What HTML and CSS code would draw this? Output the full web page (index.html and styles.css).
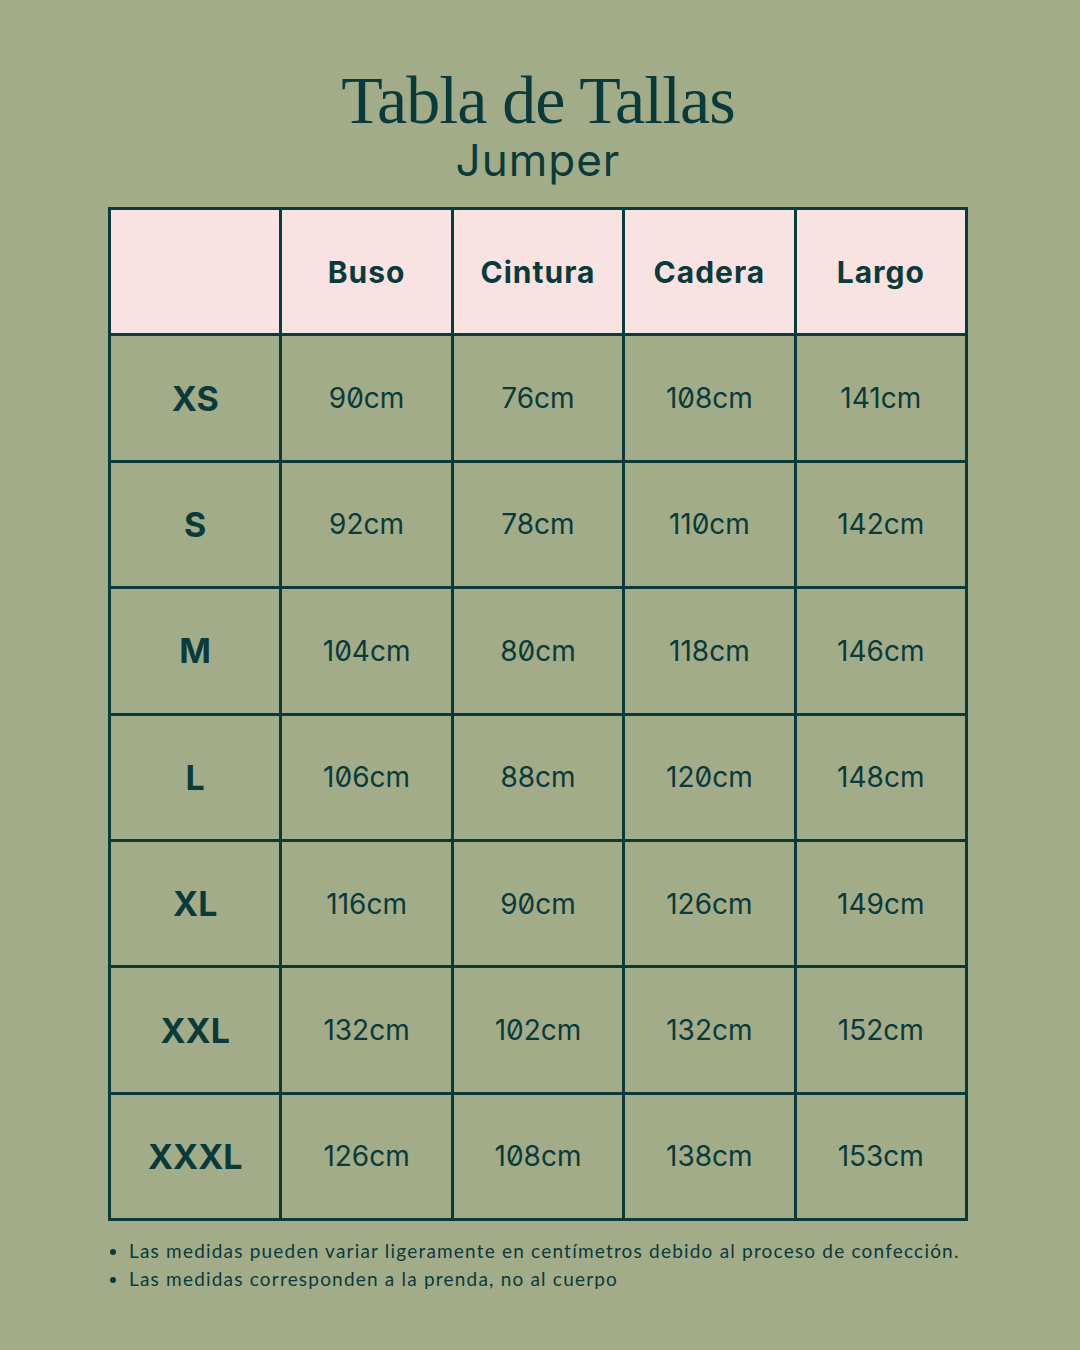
FILE: index.html
```html
<!DOCTYPE html>
<html lang="es">
<head>
<meta charset="utf-8">
<title>Tabla de Tallas</title>
<link rel="stylesheet" href="styles.css">
</head>
<body>
<main class="page">
  <header class="heading">
    <h1 class="title">Tabla de Tallas</h1>
    <h2 class="subtitle">Jumper</h2>
  </header>
  <table class="sizes">
    <thead>
      <tr><th></th><th>Buso</th><th>Cintura</th><th>Cadera</th><th>Largo</th></tr>
    </thead>
    <tbody>
      <tr><th>XS</th><td>90cm</td><td>76cm</td><td>108cm</td><td>141cm</td></tr>
      <tr><th>S</th><td>92cm</td><td>78cm</td><td>110cm</td><td>142cm</td></tr>
      <tr><th>M</th><td>104cm</td><td>80cm</td><td>118cm</td><td>146cm</td></tr>
      <tr><th>L</th><td>106cm</td><td>88cm</td><td>120cm</td><td>148cm</td></tr>
      <tr><th>XL</th><td>116cm</td><td>90cm</td><td>126cm</td><td>149cm</td></tr>
      <tr><th>XXL</th><td>132cm</td><td>102cm</td><td>132cm</td><td>152cm</td></tr>
      <tr><th>XXXL</th><td>126cm</td><td>108cm</td><td>138cm</td><td>153cm</td></tr>
    </tbody>
  </table>
  <ul class="notes">
    <li>Las medidas pueden variar ligeramente en centímetros debido al proceso de confección.</li>
    <li>Las medidas corresponden a la prenda, no al cuerpo</li>
  </ul>
</main>
</body>
</html>
```

FILE: styles.css
```css
html, body {
  margin: 0;
  padding: 0;
  background: #a2ac88;
}
body {
  width: 1080px;
  height: 1350px;
  color: #0b3a3b;
  font-family: "Inter", "Liberation Sans", sans-serif;
}
.page {
  display: flex;
  flex-direction: column;
  align-items: flex-start;
  padding: 65px 0 0 108px;
}
.heading {
  width: 860px;
  display: flex;
  flex-direction: column;
  align-items: center;
}
.title {
  margin: 0;
  font-family: "Liberation Serif", serif;
  font-weight: normal;
  font-size: 68px;
  line-height: 70px;
  letter-spacing: -1px;
}
.subtitle {
  margin: 0;
  font-family: "Inter", sans-serif;
  font-weight: normal;
  font-size: 44px;
  line-height: 50px;
  letter-spacing: 1px;
}
.sizes {
  margin-top: 22px;
  border-collapse: collapse;
  border: 3px solid #0b3a3b;
  table-layout: fixed;
  width: 860px;
}
.sizes th, .sizes td {
  border: 3px solid #0b3a3b;
  height: 123.4px;
  padding: 0;
  text-align: center;
  vertical-align: middle;
}
.sizes thead th {
  background: #f9e2e2;
  font-size: 30px;
  font-weight: 700;
  letter-spacing: 1px;
}
.sizes tbody th {
  font-size: 34px;
  font-weight: 700;
}
.sizes td {
  font-size: 28px;
  font-weight: 400;
  font-feature-settings: "zero" 1;
}
.notes {
  margin: 16px 0 0 0;
  padding: 0 0 0 21px;
  font-family: "Lato", sans-serif;
  font-size: 19px;
  line-height: 28px;
  letter-spacing: 1.2px;
}
```
